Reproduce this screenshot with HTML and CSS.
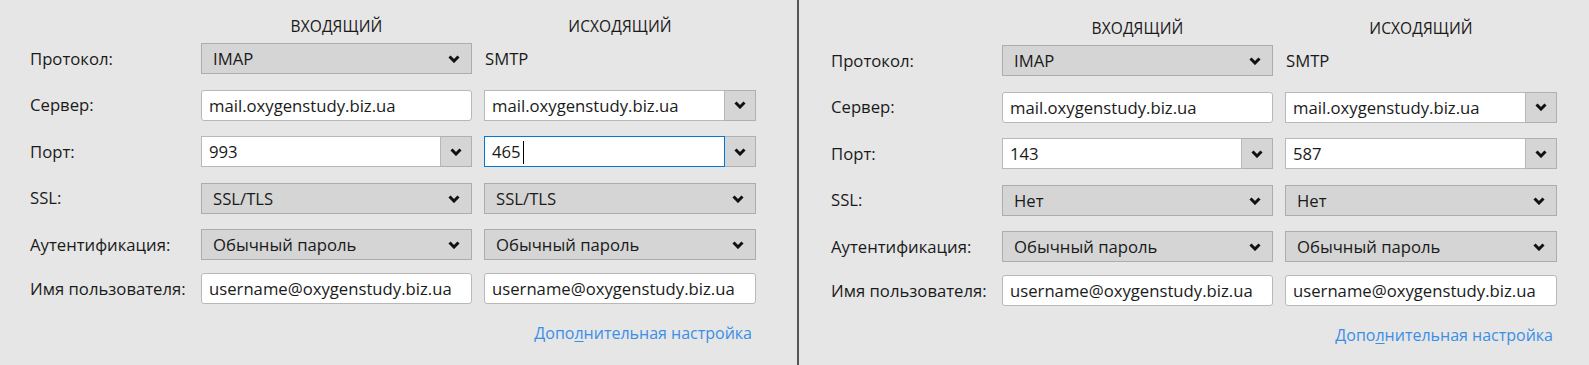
FILE: index.html
```html
<!DOCTYPE html>
<html lang="ru">
<head>
<meta charset="utf-8">
<title>Настройки сервера</title>
<link rel="stylesheet" href="styles.css">
</head>
<body>
<div class="screen">
  <section class="panel panel-left">
    <div class="grid">
      <div class="head-row row">
        <span></span>
        <span class="col-head">входящий</span>
        <span class="col-head">исходящий</span>
      </div>
      <div class="row">
        <span class="label">Протокол:</span>
        <div class="select"><span>IMAP</span><svg class="chev" viewBox="0 0 12 8"><path d="M1.5 1.5 L6 6 L10.5 1.5"/></svg></div>
        <span class="plain">SMTP</span>
      </div>
      <div class="row">
        <span class="label">Сервер:</span>
        <div class="input">mail.oxygenstudy.biz.ua</div>
        <div class="combo"><div class="combo-input">mail.oxygenstudy.biz.ua</div><div class="combo-btn"><svg class="chev" viewBox="0 0 12 8"><path d="M1.5 1.5 L6 6 L10.5 1.5"/></svg></div></div>
      </div>
      <div class="row">
        <span class="label">Порт:</span>
        <div class="combo"><div class="combo-input">993</div><div class="combo-btn"><svg class="chev" viewBox="0 0 12 8"><path d="M1.5 1.5 L6 6 L10.5 1.5"/></svg></div></div>
        <div class="combo"><div class="combo-input focused">465<span class="caret"></span></div><div class="combo-btn"><svg class="chev" viewBox="0 0 12 8"><path d="M1.5 1.5 L6 6 L10.5 1.5"/></svg></div></div>
      </div>
      <div class="row">
        <span class="label">SSL:</span>
        <div class="select"><span>SSL/TLS</span><svg class="chev" viewBox="0 0 12 8"><path d="M1.5 1.5 L6 6 L10.5 1.5"/></svg></div>
        <div class="select"><span>SSL/TLS</span><svg class="chev" viewBox="0 0 12 8"><path d="M1.5 1.5 L6 6 L10.5 1.5"/></svg></div>
      </div>
      <div class="row">
        <span class="label">Аутентификация:</span>
        <div class="select"><span>Обычный пароль</span><svg class="chev" viewBox="0 0 12 8"><path d="M1.5 1.5 L6 6 L10.5 1.5"/></svg></div>
        <div class="select"><span>Обычный пароль</span><svg class="chev" viewBox="0 0 12 8"><path d="M1.5 1.5 L6 6 L10.5 1.5"/></svg></div>
      </div>
      <div class="row row-user">
        <span class="label">Имя пользователя:</span>
        <div class="input">username@oxygenstudy.biz.ua</div>
        <div class="input">username@oxygenstudy.biz.ua</div>
      </div>
      <div class="link-row">
        <a class="link" href="#">Допо<u>л</u>нительная настройка</a>
      </div>
    </div>
  </section>
  <div class="divider"></div>
  <section class="panel panel-right">
    <div class="grid">
      <div class="head-row row">
        <span></span>
        <span class="col-head">входящий</span>
        <span class="col-head">исходящий</span>
      </div>
      <div class="row">
        <span class="label">Протокол:</span>
        <div class="select"><span>IMAP</span><svg class="chev" viewBox="0 0 12 8"><path d="M1.5 1.5 L6 6 L10.5 1.5"/></svg></div>
        <span class="plain">SMTP</span>
      </div>
      <div class="row">
        <span class="label">Сервер:</span>
        <div class="input">mail.oxygenstudy.biz.ua</div>
        <div class="combo"><div class="combo-input">mail.oxygenstudy.biz.ua</div><div class="combo-btn"><svg class="chev" viewBox="0 0 12 8"><path d="M1.5 1.5 L6 6 L10.5 1.5"/></svg></div></div>
      </div>
      <div class="row">
        <span class="label">Порт:</span>
        <div class="combo"><div class="combo-input">143</div><div class="combo-btn"><svg class="chev" viewBox="0 0 12 8"><path d="M1.5 1.5 L6 6 L10.5 1.5"/></svg></div></div>
        <div class="combo"><div class="combo-input">587</div><div class="combo-btn"><svg class="chev" viewBox="0 0 12 8"><path d="M1.5 1.5 L6 6 L10.5 1.5"/></svg></div></div>
      </div>
      <div class="row">
        <span class="label">SSL:</span>
        <div class="select"><span>Нет</span><svg class="chev" viewBox="0 0 12 8"><path d="M1.5 1.5 L6 6 L10.5 1.5"/></svg></div>
        <div class="select"><span>Нет</span><svg class="chev" viewBox="0 0 12 8"><path d="M1.5 1.5 L6 6 L10.5 1.5"/></svg></div>
      </div>
      <div class="row">
        <span class="label">Аутентификация:</span>
        <div class="select"><span>Обычный пароль</span><svg class="chev" viewBox="0 0 12 8"><path d="M1.5 1.5 L6 6 L10.5 1.5"/></svg></div>
        <div class="select"><span>Обычный пароль</span><svg class="chev" viewBox="0 0 12 8"><path d="M1.5 1.5 L6 6 L10.5 1.5"/></svg></div>
      </div>
      <div class="row row-user">
        <span class="label">Имя пользователя:</span>
        <div class="input">username@oxygenstudy.biz.ua</div>
        <div class="input">username@oxygenstudy.biz.ua</div>
      </div>
      <div class="link-row">
        <a class="link" href="#">Допо<u>л</u>нительная настройка</a>
      </div>
    </div>
  </section>
</div>
</body>
</html>
```
FILE: styles.css
```css
html, body {
  margin: 0;
  padding: 0;
  background: #e6e6e6;
}

body {
  font-family: "Open Sans", "Noto Sans", sans-serif;
  font-size: 16.7px;
  color: #1a1a1a;
  width: 1589px;
  height: 365px;
  overflow: hidden;
}

.screen {
  display: flex;
  height: 365px;
}

.panel {
  box-sizing: border-box;
  height: 365px;
}

.panel-left {
  width: 797px;
  padding: 16px 0 0 30px;
}

.panel-right {
  flex: 1;
  padding: 18px 0 0 32px;
}

.divider {
  width: 2px;
  background: #555555;
  height: 365px;
}

.grid {
  display: flex;
  flex-direction: column;
  width: 726px;
}

.row {
  display: grid;
  grid-template-columns: 159px 271px 272px;
  column-gap: 12px;
  align-items: center;
  height: 31px;
  line-height: 20px;
}

.row + .row {
  margin-top: 15.5px;
}

.head-row {
  height: 20px;
}

.head-row + .row {
  margin-top: 7px;
}

.row.row-user {
  margin-top: 13px;
}

.col-head {
  text-align: center;
  text-transform: uppercase;
  font-size: 15.5px;
  letter-spacing: 0.1px;
}

.label {
  white-space: nowrap;
}

.plain {
  padding-left: 1px;
}

.select {
  box-sizing: border-box;
  height: 31px;
  display: flex;
  align-items: center;
  justify-content: space-between;
  padding: 1px 11px 0 11px;
  background: #d5d5d5;
  border: 1px solid #adadad;
}

.chev {
  width: 12px;
  height: 8px;
  flex: none;
}

.chev path {
  fill: none;
  stroke: #111111;
  stroke-width: 3;
  stroke-linecap: butt;
  stroke-linejoin: miter;
}

.input {
  box-sizing: border-box;
  height: 31px;
  display: flex;
  align-items: center;
  padding: 1px 7px 0 7px;
  background: #ffffff;
  border: 1px solid #b8b8b8;
  border-radius: 3px;
  white-space: nowrap;
  overflow: hidden;
}

.combo {
  display: flex;
  height: 31px;
}

.combo-input {
  box-sizing: border-box;
  flex: 1;
  height: 31px;
  display: flex;
  align-items: center;
  padding: 1px 7px 0 7px;
  background: #ffffff;
  border: 1px solid #b8b8b8;
  white-space: nowrap;
  overflow: hidden;
}

.combo-input.focused {
  border-color: #0078d7;
}

.caret {
  display: inline-block;
  width: 0;
  height: 23px;
  border-left: 1px solid #000000;
  margin-left: 2px;
}

.combo-btn {
  box-sizing: border-box;
  width: 31px;
  height: 31px;
  flex: none;
  display: flex;
  align-items: center;
  justify-content: center;
  background: #d5d5d5;
  border: 1px solid #b0b0b0;
  border-left: none;
}

.link-row {
  display: flex;
  justify-content: flex-end;
  margin-top: 19px;
  padding-right: 4px;
  line-height: 20px;
}

.link {
  color: #3b8ee6;
  text-decoration: none;
  font-size: 16px;
}

.link u {
  text-decoration: underline;
  text-underline-offset: 2px;
}
```
